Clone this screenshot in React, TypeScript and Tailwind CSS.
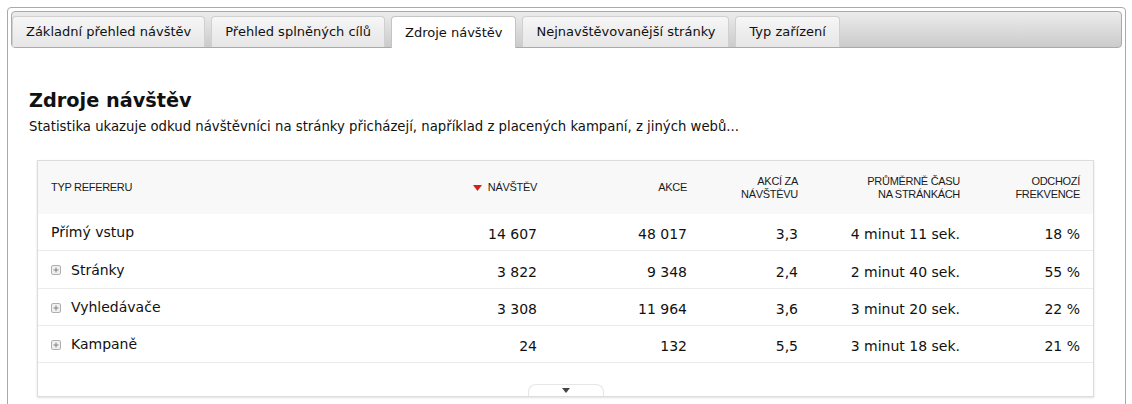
import React from "react";

const tabs = [
  { label: "Základní přehled návštěv", active: false },
  { label: "Přehled splněných cílů", active: false },
  { label: "Zdroje návštěv", active: true },
  { label: "Nejnavštěvovanější stránky", active: false },
  { label: "Typ zařízení", active: false },
];

const rows = [
  { name: "Přímý vstup", plus: false, v: "14 607", a: "48 017", apv: "3,3", t: "4 minut 11 sek.", b: "18 %", h: "h-[37px]" },
  { name: "Stránky", plus: true, v: "3 822", a: "9 348", apv: "2,4", t: "2 minut 40 sek.", b: "55 %", h: "h-[38px]" },
  { name: "Vyhledávače", plus: true, v: "3 308", a: "11 964", apv: "3,6", t: "3 minut 20 sek.", b: "22 %", h: "h-[37px]" },
  { name: "Kampaně", plus: true, v: "24", a: "132", apv: "5,5", t: "3 minut 18 sek.", b: "21 %", h: "h-[37px]" },
];

function PlusBox() {
  return (
    <svg width="10" height="10" viewBox="0 0 10 10" className="shrink-0">
      <rect x="0.5" y="0.5" width="9" height="9" rx="1.5" fill="#f0f0f0" stroke="#b0b0b0" />
      <path d="M2.5 5H7.5M5 2.5V7.5" stroke="#808080" strokeWidth="1" />
    </svg>
  );
}

const grid = "grid grid-cols-[349px_137px_150px_111px_162px_120px] px-[13px]";

export default function App() {
  return (
    <div className="w-[1132px] h-[404px] overflow-hidden bg-white pt-[7px] pl-[7px] pr-[6px]" style={{ fontFamily: '"DejaVu Sans", Verdana, sans-serif' }}>
      <div className="h-[420px] border border-[#aaaaaa] rounded-t-[4px] bg-white pt-[3px] px-[3px]">
        {/* tab bar */}
        <div className="h-[37px] rounded-[4px] border border-[#aaaaaa] bg-gradient-to-b from-[#ececec] to-[#cbcbcb] flex items-end gap-[6px]">
          {tabs.map((t) => (
            <div
              key={t.label}
              className={
                t.active
                  ? "h-[32px] -mb-px px-[13px] flex items-center rounded-t-[4px] border border-b-0 border-[#c4c4c4] bg-white text-[13px] text-[#111]"
                  : "h-[31px] px-[13px] flex items-center rounded-t-[4px] border border-b-0 border-[#d0d0d0] bg-gradient-to-b from-[#f6f6f6] to-[#e6e6e6] text-[13px] text-[#111]"
              }
            >
              {t.label}
            </div>
          ))}
        </div>

        {/* content */}
        <div className="pl-[18px] pr-[26px] pt-[41px]">
          <h2 className="text-[19.3px] font-bold leading-[23px] text-[#111]">Zdroje návštěv</h2>
          <p className="mt-[7px] text-[13.25px] leading-[16px] text-[#111]">
            Statistika ukazuje odkud návštěvníci na stránky přicházejí, například z placených kampaní, z jiných webů...
          </p>

          <div className="mt-[25px] ml-[8px] w-[1057px] border border-[#dcdcdc] shadow-[0_1px_2px_rgba(0,0,0,0.12)] bg-white">
            <div
              className={`${grid} h-[53px] bg-[#f8f8f8] items-center text-[11px] leading-[13px] tracking-[-0.3px] text-[#1a1a1a]`}
              style={{ fontFamily: '"Liberation Sans", Arial, sans-serif' }}
            >
              <div>TYP REFERERU</div>
              <div className="flex items-center justify-end gap-[6px]">
                <svg width="9" height="6" viewBox="0 0 9 6"><path d="M0 0H9L4.5 6Z" fill="#d0211c" /></svg>
                <span>NÁVŠTĚV</span>
              </div>
              <div className="text-right">AKCE</div>
              <div className="text-right">AKCÍ ZA<br />NÁVŠTĚVU</div>
              <div className="text-right">PRŮMĚRNĚ ČASU<br />NA STRÁNKÁCH</div>
              <div className="text-right">ODCHOZÍ<br />FREKVENCE</div>
            </div>
            {rows.map((r) => (
              <div key={r.name} className={`${grid} ${r.h} items-center border-b border-[#ececec] text-[14px] text-[#111]`}>
                <div className="flex items-center gap-[10px] mt-[1px]">
                  {r.plus && <PlusBox />}
                  <span>{r.name}</span>
                </div>
                <div className="text-right pt-[5px]">{r.v}</div>
                <div className="text-right pt-[5px]">{r.a}</div>
                <div className="text-right pt-[5px]">{r.apv}</div>
                <div className="text-right pt-[5px]">{r.t}</div>
                <div className="text-right pt-[5px]">{r.b}</div>
              </div>
            ))}
            <div className="h-[33px] flex items-end justify-center">
              <div className="w-[76px] h-[12px] rounded-t-[8px] border border-b-0 border-[#e6e6e6] flex items-start justify-center pt-[3px]">
                <svg width="8" height="5" viewBox="0 0 8 5"><path d="M0 0H8L4 5Z" fill="#444" /></svg>
              </div>
            </div>
          </div>
        </div>
      </div>
    </div>
  );
}
